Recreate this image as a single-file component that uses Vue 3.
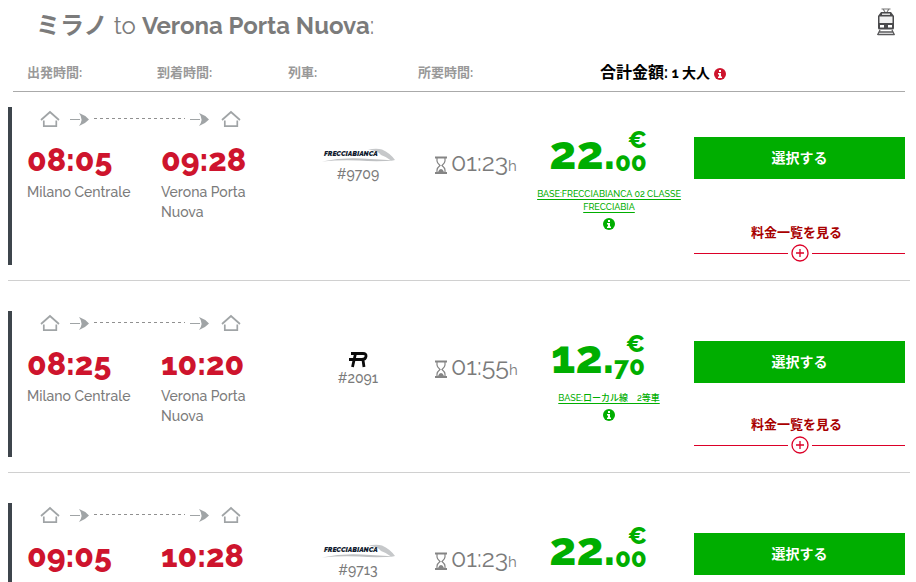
<script setup>
const columns = ['出発時間:', '到着時間:', '列車:', '所要時間:']

const trips = [
  {
    depart: '08:05', from: 'Milano Centrale', arrive: '09:28', to: 'Verona Porta Nuova',
    brand: 'freccia', train: '#9709', duration: '01:23', euros: '22.', cents: '00',
    fare: 'BASE:FRECCIABIANCA 02 CLASSE FRECCIABIA',
  },
  {
    depart: '08:25', from: 'Milano Centrale', arrive: '10:20', to: 'Verona Porta Nuova',
    brand: 'regional', train: '#2091', duration: '01:55', euros: '12.', cents: '70',
    fare: 'BASE:ローカル線\u30002等車',
  },
  {
    depart: '09:05', from: 'Milano Centrale', arrive: '10:28', to: 'Verona Porta Nuova',
    brand: 'freccia', train: '#9713', duration: '01:23', euros: '22.', cents: '00',
    fare: 'BASE:FRECCIABIANCA 02 CLASSE FRECCIABIA',
  },
]
</script>

<template>
  <main class="results">
    <header class="heading">
      <h1><strong>ミラノ</strong> to <strong>Verona Porta Nuova</strong>:</h1>
      <svg class="tram" viewBox="0 0 20 28" aria-hidden="true">
        <path d="M5.500 1h9M7 1l2 3M13 1l-2 3" fill="none" stroke="#777" stroke-width="1.2" />
        <path d="M5 4h10l3 4v12q0 1.500-1.500 1.500h-13Q2 21.500 2 20V8z" fill="#4a4a4c" />
        <path d="M6 5.500h8v1.500H6z" fill="#ddd" />
        <path d="M3.500 8.500h13v6.500h-13z" fill="#f1f1f1" />
        <path d="M4 17h4v2.500H4zM12 17h4v2.500h-4z" fill="#fff" />
        <path d="M4 22l-2.500 5M16 22l2.500 5M3 24h14M1.500 26.500h17" fill="none" stroke="#5a5a5c" stroke-width="1.3" />
      </svg>
    </header>

    <div class="labels">
      <span v-for="c in columns" :key="c">{{ c }}</span>
      <span class="total">合計金額: <small>1 大人</small>
        <svg class="info" viewBox="0 0 12 12" aria-hidden="true">
          <circle cx="6" cy="6" r="6" fill="#ce142d" />
          <path d="M5 2h2v2H5zM4 5h3v3.500h1V10H4V8.500h1V6.500H4z" fill="#fff" />
        </svg>
      </span>
    </div>

    <article v-for="t in trips" :key="t.train" class="trip">
      <div class="body">
        <div class="journey">
          <svg class="route" viewBox="0 0 202 18" aria-hidden="true">
            <g fill="none" stroke="#a0a4a6" stroke-width="1.700">
              <path d="M1 10l9-8 9 8M3.800 10.500V16.200h12.500V10.500" />
              <path d="M182 10l9-8 9 8M184.800 10.500V16.200h12.500V10.500" />
            </g>
            <path d="M30 9.500h10M150 9.500h10" stroke="#a0a4a6" />
            <path d="M54 8.500h91" stroke="#909090" stroke-dasharray="3 3" />
            <path d="M39 3q6 2 10 6.500Q45 14 39 16q5-6.500 0-13zM159 3q6 2 10 6.500-4 4.500-10 6.500 5-6.500 0-13z" fill="#a0a4a6" />
          </svg>
          <div class="stops">
            <div><time>{{ t.depart }}</time><p>{{ t.from }}</p></div>
            <div><time>{{ t.arrive }}</time><p>{{ t.to }}</p></div>
          </div>
        </div>

        <div class="train">
          <svg v-if="t.brand === 'freccia'" class="logo" viewBox="0 0 74 16" role="img" aria-label="Frecciabianca">
            <path d="M47 1.500Q56 0 61 1.500 69 5 74 12l-4 .5Q66 9 60 7 57 2.500 47 1.500z" fill="#c6c8ca" />
            <path d="M1 13.500Q20 9.500 40 10.500T74 12.500Q55 14 38 12.500 20 11.500 1 13.500z" fill="#bfc1c3" />
            <text x="3" y="8" class="brand">FRECCIABIANCA</text>
          </svg>
          <svg v-else class="logo" viewBox="0 0 74 16" role="img" aria-label="Regionale">
            <path d="M30 1.500h12q3.500 0 3 3-.5 3-4 3H28M42 8l1 7M34.500 1.500L31.500 15" fill="none" stroke="#0b0b0b" stroke-width="2.800" />
          </svg>
          <span>{{ t.train }}</span>
        </div>

        <div class="duration">
          <svg viewBox="0 0 12 19" aria-hidden="true">
            <path d="M0 1.500h12M0 17h12" stroke="#858585" stroke-width="1.800" />
            <path d="M2 2v3q0 2 3 4.500Q2 12 2 14v2.500M10 2v3q0 2-3 4.500 3 2.500 3 4.500v2.500" fill="none" stroke="#858585" stroke-width="1.200" />
            <path d="M3 16q1-3 3-3t3 3z" fill="#858585" />
          </svg>
          <span>{{ t.duration }}<small>h</small></span>
        </div>

        <div class="price">
          <div class="amount">
            <span class="euros">{{ t.euros }}</span>
            <span class="minor"><span class="sign">€</span><span>{{ t.cents }}</span></span>
          </div>
          <a href="#" class="fare">{{ t.fare }}</a>
          <svg class="info" viewBox="0 0 12 12" aria-hidden="true">
            <circle cx="6" cy="6" r="6" fill="#00ae00" />
            <path d="M5 2h2v2H5zM4 5h3v3.500h1V10H4V8.500h1V6.500H4z" fill="#fff" />
          </svg>
        </div>

        <div class="actions">
          <button type="button">選択する</button>
          <a href="#" class="more">
            <span class="caption">料金一覧を見る</span>
            <span class="rule">
              <svg viewBox="0 0 18 18" aria-hidden="true">
                <circle cx="9" cy="9" r="8" />
                <path d="M5 9h8M9 5v8" />
              </svg>
            </span>
          </a>
        </div>
      </div>
    </article>
  </main>
</template>

<style>
body {
  background: #fff;
}
</style>

<style scoped>
.results {
  height: 100vh;
  overflow: hidden;
  color: #7b7b7b;
  font-family: Raleway, Lato, "Noto Sans CJK JP", sans-serif;
}
.heading {
  display: flex;
  justify-content: space-between;
  align-items: flex-start;
  padding: 8px 20px 0 36px;
}
h1 {
  margin: 0;
  font-size: 24px;
  line-height: 36px;
  font-weight: 400;
}
.tram {
  width: 20px;
  height: 28px;
}
.labels {
  display: grid;
  grid-template-columns: 130fr 131fr 130fr 182fr 305fr;
  align-items: center;
  height: 48px;
  box-sizing: border-box;
  margin: 0 11px 0 13px;
  padding-left: 14px;
  border-bottom: 1px solid #aaa;
  color: #999;
  font-size: 13px;
  line-height: 20px;
  font-weight: 700;
}
.labels > span {
  padding-top: 10px;
}
.total {
  color: #000;
  font-size: 16px;
}
.total small {
  margin-right: 4px;
  font-size: 14px;
}
.info {
  width: 12px;
  height: 12px;
}
.total .info {
  vertical-align: -2px;
}
.trip {
  margin: 0 6px 0 8px;
  padding: 30px 0 15px;
  border-bottom: 1px solid #d0d0d0;
}
.labels + .trip {
  padding-top: 15px;
}
.body {
  display: grid;
  grid-template-columns: 261fr 140fr 105fr 161fr 211fr;
  min-height: 146px;
  padding-left: 15px;
  padding-right: 5px;
  border-left: 4px solid #3e454c;
}
.route {
  display: block;
  width: 202px;
  height: 18px;
  margin: 3px 0 0 13px;
}
.stops {
  display: grid;
  grid-template-columns: 134fr 127fr;
}
time {
  display: block;
  margin-top: 12px;
  color: #ce142d;
  font-size: 32px;
  line-height: 40px;
  font-weight: 800;
}
.stops p {
  max-width: 110px;
  margin: 2px 0 0;
  font-size: 14px;
  line-height: 20px;
  font-weight: 500;
}
.train {
  display: flex;
  flex-direction: column;
  align-items: center;
  padding-top: 41px;
  font-size: 14px;
  line-height: 20px;
  font-weight: 500;
}
.logo {
  width: 74px;
  height: 16px;
}
.brand {
  fill: #121c30;
  font: italic 900 7px Raleway, Lato, sans-serif;
}
.duration {
  display: flex;
  align-items: flex-start;
  gap: 4px;
  padding: 41px 0 0 7px;
  font-size: 25px;
  line-height: 28px;
}
.duration svg {
  width: 12px;
  height: 19px;
  margin-top: 8px;
}
.duration small {
  font-size: 15px;
}
.price {
  display: flex;
  flex-direction: column;
  align-items: center;
  padding: 0 9px 35px 0;
  color: #00ae00;
}
.amount {
  display: flex;
  height: 81px;
  padding-right: 22px;
  font-weight: 800;
}
.euros {
  font-size: 47px;
  line-height: 92px;
}
.minor {
  display: flex;
  flex-direction: column;
  align-items: flex-end;
  padding-top: 22px;
  font-size: 26px;
  line-height: 22px;
}
.sign {
  font-size: 24px;
}
.fare {
  color: #00ae00;
  font-size: 9px;
  line-height: 13px;
  font-weight: 500;
  text-align: center;
  text-underline-offset: 2px;
}
.price .info {
  margin-top: 4px;
}
.actions {
  display: flex;
  flex-direction: column;
  justify-content: space-between;
  padding: 30px 0 3px;
}
button {
  height: 42px;
  padding: 0 0 2px;
  border: 0;
  background: #00ae00;
  color: #fff;
  font-family: inherit;
  font-size: 14px;
  font-weight: 700;
}
.more {
  color: #a80000;
  font-size: 13px;
  line-height: 20px;
  font-weight: 700;
  text-align: center;
  text-decoration: none;
}
.caption {
  padding-right: 6px;
}
.rule {
  display: flex;
  align-items: center;
  gap: 3px;
  margin-top: 1px;
}
.rule::before,
.rule::after {
  content: "";
  flex: 1;
  border-top: 1px solid #dc0028;
}
.rule svg {
  width: 18px;
  height: 18px;
  fill: none;
  stroke: #dc0028;
  stroke-width: 1.3;
}
</style>
